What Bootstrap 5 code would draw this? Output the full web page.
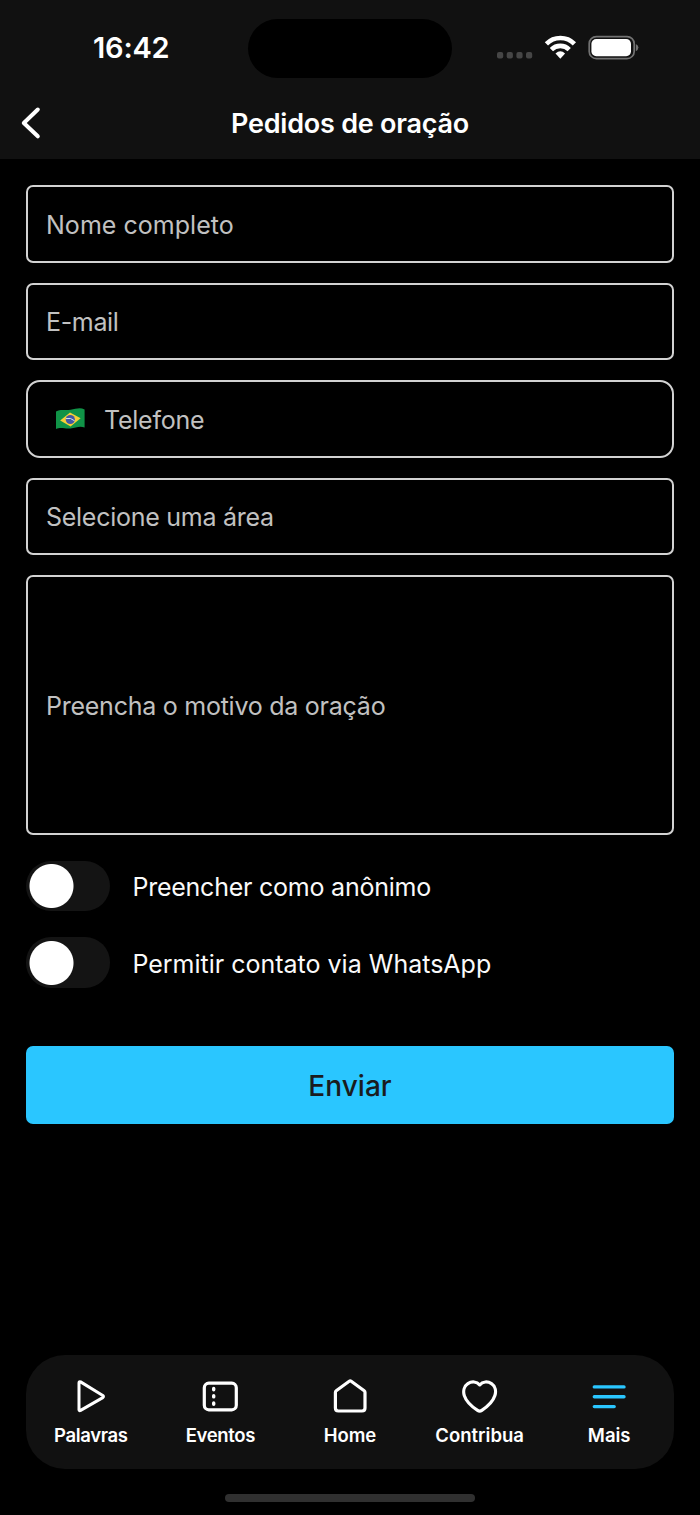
<!DOCTYPE html>
<html lang="pt-BR">
<head>
<meta charset="utf-8">
<meta name="viewport" content="width=device-width, initial-scale=1">
<title>Pedidos de oração</title>
<link href="https://cdn.jsdelivr.net/npm/bootstrap@5.3.0/dist/css/bootstrap.min.css" rel="stylesheet">
<style>
  body { font-family: Inter, "Liberation Sans", sans-serif; background: #000; color: #fff; }
  .screen { width: 700px; height: 1515px; }
  svg { display: block; flex: none; }
  .app-header { height: 159px; background: #111; }
  .status-bar { height: 96px; }
  .clock { width: 248px; padding-left: 93px; font-size: 29px; font-weight: 600; line-height: 96px; letter-spacing: -.2px; }
  .island { width: 204px; height: 59px; margin-top: 1px; border-radius: 30px; background: #000; }
  .status-icons { width: 248px; padding-left: 44px; }
  .title-bar { height: 63px; padding: 0 20px 9px; }
  .title-bar h1 { font-size: 27px; font-weight: 600; letter-spacing: -.23px; line-height: 54px; padding-top: 2px; }
  .back-btn { width: 22px; }
  .prayer-form { padding: 26px 26px 0; }
  .fields { gap: 20px; }
  .field, .field:focus { height: 77.5px; padding: 2px 18px 0; border: 2px solid #d2d2d2; border-radius: 7px; background: #000; color: #fff; font-size: 25px; line-height: 36px; box-shadow: none; }
  .field::placeholder, .field input::placeholder { color: #c1c1c1; opacity: 1; }
  .phone-field { border-radius: 14px; padding: 0 18px 0 28px; gap: 19px; }
  .phone-field input { outline: 0; color: #fff; padding: 2px 0 0; }
  textarea.field, textarea.field:focus { height: 260px; padding-top: 111px; resize: none; }
  .ls-name { letter-spacing: .03px; } .ls-mail { letter-spacing: -.35px; }
  .ls-phone { letter-spacing: -.25px; } .ls-area { letter-spacing: -.27px; } .ls-reason { letter-spacing: -.25px; }
  .ls-anon { letter-spacing: -.23px; }
  .switches { padding-top: 26px; gap: 26px; }
  .toggle.form-check-input { width: 84px; height: 50px; margin: 0; border: 0; border-radius: 25px; background-color: #141414;
    background-image: radial-gradient(circle at 25.5px 25px, #fff 21.5px, transparent 22.5px); background-position: 0 0; background-size: 84px 50px; }
  .toggle-label { font-size: 25px; line-height: 50px; margin-left: 22.4px; padding-top: 1px; margin-bottom: -1px; color: #fafafa; }
  .switches .form-switch { height: 50px; min-height: 0; }
  .switches .form-switch + .form-switch, .toggle.toggle-tall { height: 51px; }
  .toggle.toggle-tall { background-position: 0 .5px; }
  .send { height: 78px; margin-top: 58px; padding: 8px 0 6px; border: 0; border-radius: 7px; background: #2ac6ff; color: #1a1c1e; font-size: 28px; font-weight: 500; letter-spacing: .05px; }
  .tab-bar { height: 114px; margin: 0 26px; border-radius: 39px; background: #111; }
  .tab-link { padding: 24px 0 0; color: #fff; font-size: 18.5px; font-weight: 600; line-height: 24px; gap: 8px; }
  .ls-tab { letter-spacing: -.35px; }
  .home-indicator { width: 250px; height: 8px; margin: 25px auto 13px; border-radius: 4px; background: #303030; }
</style>
</head>
<body>
<div class="screen d-flex flex-column overflow-hidden">
  <header class="app-header">
    <div class="status-bar d-flex align-items-center">
      <div class="clock">16:42</div>
      <div class="island"></div>
      <div class="status-icons d-flex">
        <svg width="144" height="30" viewBox="496 32.6 144 30">
          <g fill="#464646"><rect x="497" y="51.6" width="6.2" height="6.4" rx="2"/><rect x="506.7" y="51.6" width="6.2" height="6.4" rx="2"/><rect x="516.4" y="51.6" width="6.2" height="6.4" rx="2"/><rect x="526" y="51.6" width="6.2" height="6.4" rx="2"/></g>
          <g fill="none" stroke="#fff" stroke-width="4.6"><path d="M546.4 43.4A19.8 19.8 0 0 1 574.4 43.4"/><path d="M551.4 49.2A12.5 12.5 0 0 1 569.2 49.2"/></g>
          <path fill="#fff" d="M555.5 53.2Q560.3 48.6 565.1 53.2L560.3 58.3Z"/>
          <rect x="589.2" y="36.2" width="45" height="22" rx="7.2" fill="none" stroke="#727272" stroke-width="1.7"/>
          <rect x="591.4" y="38.6" width="39.6" height="17.2" rx="4.8" fill="#fff"/>
          <path fill="#727272" d="M635.8 43.6Q638.4 45 638.4 47.2T635.8 50.8Z"/>
        </svg>
      </div>
    </div>
    <div class="title-bar d-flex align-items-center justify-content-between">
      <a href="#" class="back-btn" aria-label="Voltar"><svg width="22" height="34" viewBox="20 106 22 34" fill="none" stroke="#fff" stroke-width="4" stroke-linecap="round" stroke-linejoin="round"><path d="M37.8 109.5 23.8 123 37.8 136.3"/></svg></a>
      <h1 class="mb-0">Pedidos de oração</h1>
      <span class="back-btn"></span>
    </div>
  </header>

  <form class="prayer-form">
    <div class="fields d-flex flex-column">
      <input class="form-control field ls-name" type="text" placeholder="Nome completo">
      <input class="form-control field ls-mail" type="email" placeholder="E-mail">
      <div class="field phone-field d-flex align-items-center">
        <svg width="29" height="22" viewBox="0 0 29 22">
          <path fill="#109347" d="M0 3.5C5 .8 9 2.8 14.5 1.8S24-.7 28.6 1.4V19.6C24 17.6 20 19.7 14.5 20.4S5 18.6 0 21Z"/>
          <path fill="#f6cf36" d="M4.2 12.6 14 4.6 24.6 10.2 14.6 18.4Z"/>
          <circle cx="14.3" cy="11.5" r="4.6" fill="#4358a5"/>
          <path d="M10 10.6Q14.5 9.2 18.6 12.8" fill="none" stroke="#d8e1ea" stroke-width="1"/>
        </svg>
        <input class="border-0 bg-transparent flex-fill ls-phone" type="tel" placeholder="Telefone">
      </div>
      <input class="form-control field ls-area" type="text" placeholder="Selecione uma área">
      <textarea class="form-control field ls-reason" placeholder="Preencha o motivo da oração"></textarea>
    </div>
    <div class="switches d-flex flex-column">
      <div class="form-switch p-0 d-flex align-items-center">
        <input class="form-check-input toggle" type="checkbox" role="switch" id="anon">
        <label class="toggle-label ls-anon" for="anon">Preencher como anônimo</label>
      </div>
      <div class="form-switch p-0 d-flex align-items-center">
        <input class="form-check-input toggle toggle-tall" type="checkbox" role="switch" id="whats">
        <label class="toggle-label" for="whats">Permitir contato via WhatsApp</label>
      </div>
    </div>
    <button type="button" class="btn send w-100">Enviar</button>
  </form>

  <nav class="tab-bar nav nav-fill flex-nowrap mt-auto">
    <a href="#" class="tab-link nav-item w-25 text-decoration-none d-flex flex-column align-items-center">
      <svg width="36" height="36" viewBox="0.7 0 36 36" fill="none" stroke="#fff" stroke-width="3" stroke-linejoin="round"><path d="M6.7 3.8V30.8Q6.9 32.2 8.3 31.4L30.5 18.6Q31.8 17.6 30.5 16.5L8.3 2.9Q6.8 2.3 6.7 3.8Z"/></svg>
      <span class="ls-tab">Palavras</span></a>
    <a href="#" class="tab-link nav-item w-25 text-decoration-none d-flex flex-column align-items-center">
      <svg width="36" height="36" viewBox="0 0 36 36" fill="none" stroke="#fff" stroke-width="3.2"><rect x="2.3" y="4.2" width="32" height="26.6" rx="4.5"/><path stroke-width="3.4" stroke-linecap="round" d="M11.7 9.4V10.7M11.7 16.8V17.9M11.7 24V25.3"/></svg>
      <span class="ls-tab">Eventos</span></a>
    <a href="#" class="tab-link nav-item w-25 text-decoration-none d-flex flex-column align-items-center">
      <svg width="36" height="36" viewBox="0 0 36 36" fill="none" stroke="#fff" stroke-width="3.2" stroke-linejoin="round"><path d="M3.4 13.4V29Q3.4 32 6.4 32H30Q33 32 33 29V13.4Q33 12.4 32.2 11.8L19.2 2.3Q18.2 1.6 17.2 2.3L4.2 11.8Q3.4 12.4 3.4 13.4Z"/></svg>
      <span>Home</span></a>
    <a href="#" class="tab-link nav-item w-25 text-decoration-none d-flex flex-column align-items-center">
      <svg width="36" height="36" viewBox="0.8 0 36 36" fill="none" stroke="#fff" stroke-width="3.2" stroke-linejoin="round"><path d="M18.5 5.9C15.5 2.3 10.4 2.2 6.7 4.6C2.9 7.1 1.7 12 3.1 16.6C5 22.5 10.9 27.8 16.4 31.4Q18.5 32.8 20.6 31.4C26.1 27.8 31.8 22.5 33.7 16.6C35.1 12 34.1 7.1 30.3 4.6C26.6 2.2 21.5 2.3 18.5 5.9Z"/></svg>
      <span>Contribua</span></a>
    <a href="#" class="tab-link nav-item w-25 text-decoration-none d-flex flex-column align-items-center">
      <svg width="36" height="36" viewBox="0 0 36 36" fill="none" stroke="#2ac6ff" stroke-width="3.4" stroke-linecap="round"><path d="M3.3 7.9H33M3.3 17.7H33M3.3 27.6H23.2"/></svg>
      <span>Mais</span></a>
  </nav>
  <div class="home-indicator flex-shrink-0"></div>
</div>
<script src="https://cdn.jsdelivr.net/npm/bootstrap@5.3.0/dist/js/bootstrap.bundle.min.js"></script>
</body>
</html>
